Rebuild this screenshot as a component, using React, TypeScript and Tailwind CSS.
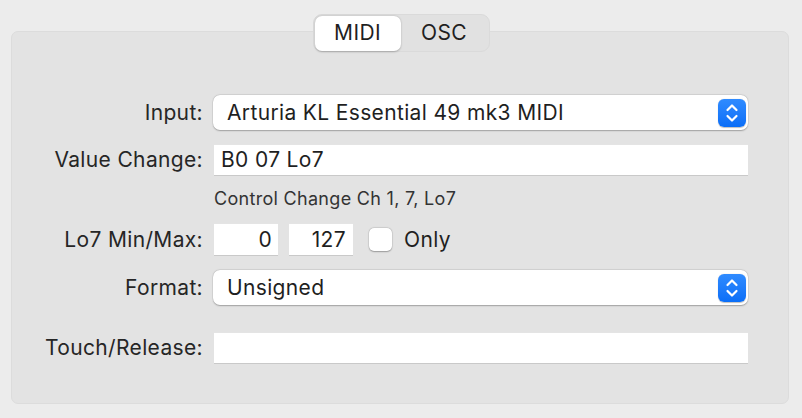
import React from "react";

function Stepper() {
  return (
    <span className="flex h-[28px] w-[28px] items-center justify-center rounded-[6px] bg-gradient-to-b from-[#2f8bff] to-[#0a6ef7] shadow-[0_0.5px_1px_rgba(0,0,0,0.25)]">
      <svg width="14" height="22" viewBox="0 0 14 22" fill="none">
        <path d="M2.5 8 L7 3.5 L11.5 8" stroke="white" strokeWidth="2.2" strokeLinecap="round" strokeLinejoin="round" />
        <path d="M2.5 14 L7 18.5 L11.5 14" stroke="white" strokeWidth="2.2" strokeLinecap="round" strokeLinejoin="round" />
      </svg>
    </span>
  );
}

function PopUp({ value }: { value: string }) {
  return (
    <div className="flex h-[35px] w-full items-center justify-between rounded-[7px] bg-white pl-[14px] pr-[2px] shadow-[0_0.5px_1.5px_rgba(0,0,0,0.28),0_0_0_0.5px_rgba(0,0,0,0.06)]">
      <span>{value}</span>
      <Stepper />
    </div>
  );
}

function Field({ value, className = "" }: { value?: string; className?: string }) {
  return (
    <div
      className={`flex h-[32px] items-center bg-white border-t border-t-[#e4e4e4] border-b border-b-[#c9c9c9] ${className}`}
    >
      {value}
    </div>
  );
}

function Row({ label, children }: { label: string; children: React.ReactNode }) {
  return (
    <div className="grid grid-cols-[191px_1fr] items-center gap-x-[10px]">
      <span className="text-right text-[#262626]">{label}</span>
      {children}
    </div>
  );
}

export default function App() {
  return (
    <div className="min-h-[418px] w-[802px] bg-[#ececec] pt-[14px] font-['Inter',sans-serif] text-[21px] tracking-[0.35px] text-[#1f1f1f]">
      <div className="relative z-10 flex justify-center">
        <div className="flex h-[38px] w-[177px] items-center rounded-[9px] border border-[#dadada] bg-[#e1e1e1] p-[1px]">
          <div className="flex h-[35px] w-[86px] items-center justify-center rounded-[7px] bg-white shadow-[0_0.5px_2px_rgba(0,0,0,0.25)]">
            MIDI
          </div>
          <div className="flex h-[35px] flex-1 items-center justify-center">OSC</div>
        </div>
      </div>

      <div className="mx-[11px] -mt-[21px] flex h-[373px] w-[778px] flex-col rounded-[7px] border border-[#dcdcdc] bg-[#e3e3e3] pt-[63px] pr-[40px]">
        <Row label="Input:">
          <PopUp value="Arturia KL Essential 49 mk3 MIDI" />
        </Row>

        <div className="mt-[14px]">
          <Row label="Value Change:">
            <Field value="B0 07 Lo7" className="ml-[1px] pl-[7px]" />
          </Row>
        </div>

        <div className="mt-[12px] grid grid-cols-[191px_1fr] gap-x-[10px]">
          <span />
          <span className="h-[22px] pl-[1px] text-[18px] leading-[22px] tracking-[0.3px] text-[#333]">
            Control Change Ch 1, 7, Lo7
          </span>
        </div>

        <div className="mt-[13px]">
          <Row label="Lo7 Min/Max:">
            <div className="flex items-center">
              <Field value="0" className="ml-[1px] h-[33px] w-[64px] justify-end pr-[6px]" />
              <Field value="127" className="ml-[11px] h-[33px] w-[64px] justify-end pr-[7px]" />
              <span className="ml-[16px] h-[23px] w-[23px] rounded-[5px] bg-white shadow-[0_0.5px_1.5px_rgba(0,0,0,0.3),0_0_0_0.5px_rgba(0,0,0,0.08)]" />
              <span className="ml-[12px]">Only</span>
            </div>
          </Row>
        </div>

        <div className="mt-[14px]">
          <Row label="Format:">
            <PopUp value="Unsigned" />
          </Row>
        </div>

        <div className="mt-[27px]">
          <Row label="Touch/Release:">
            <Field className="ml-[1px]" />
          </Row>
        </div>
      </div>
    </div>
  );
}
